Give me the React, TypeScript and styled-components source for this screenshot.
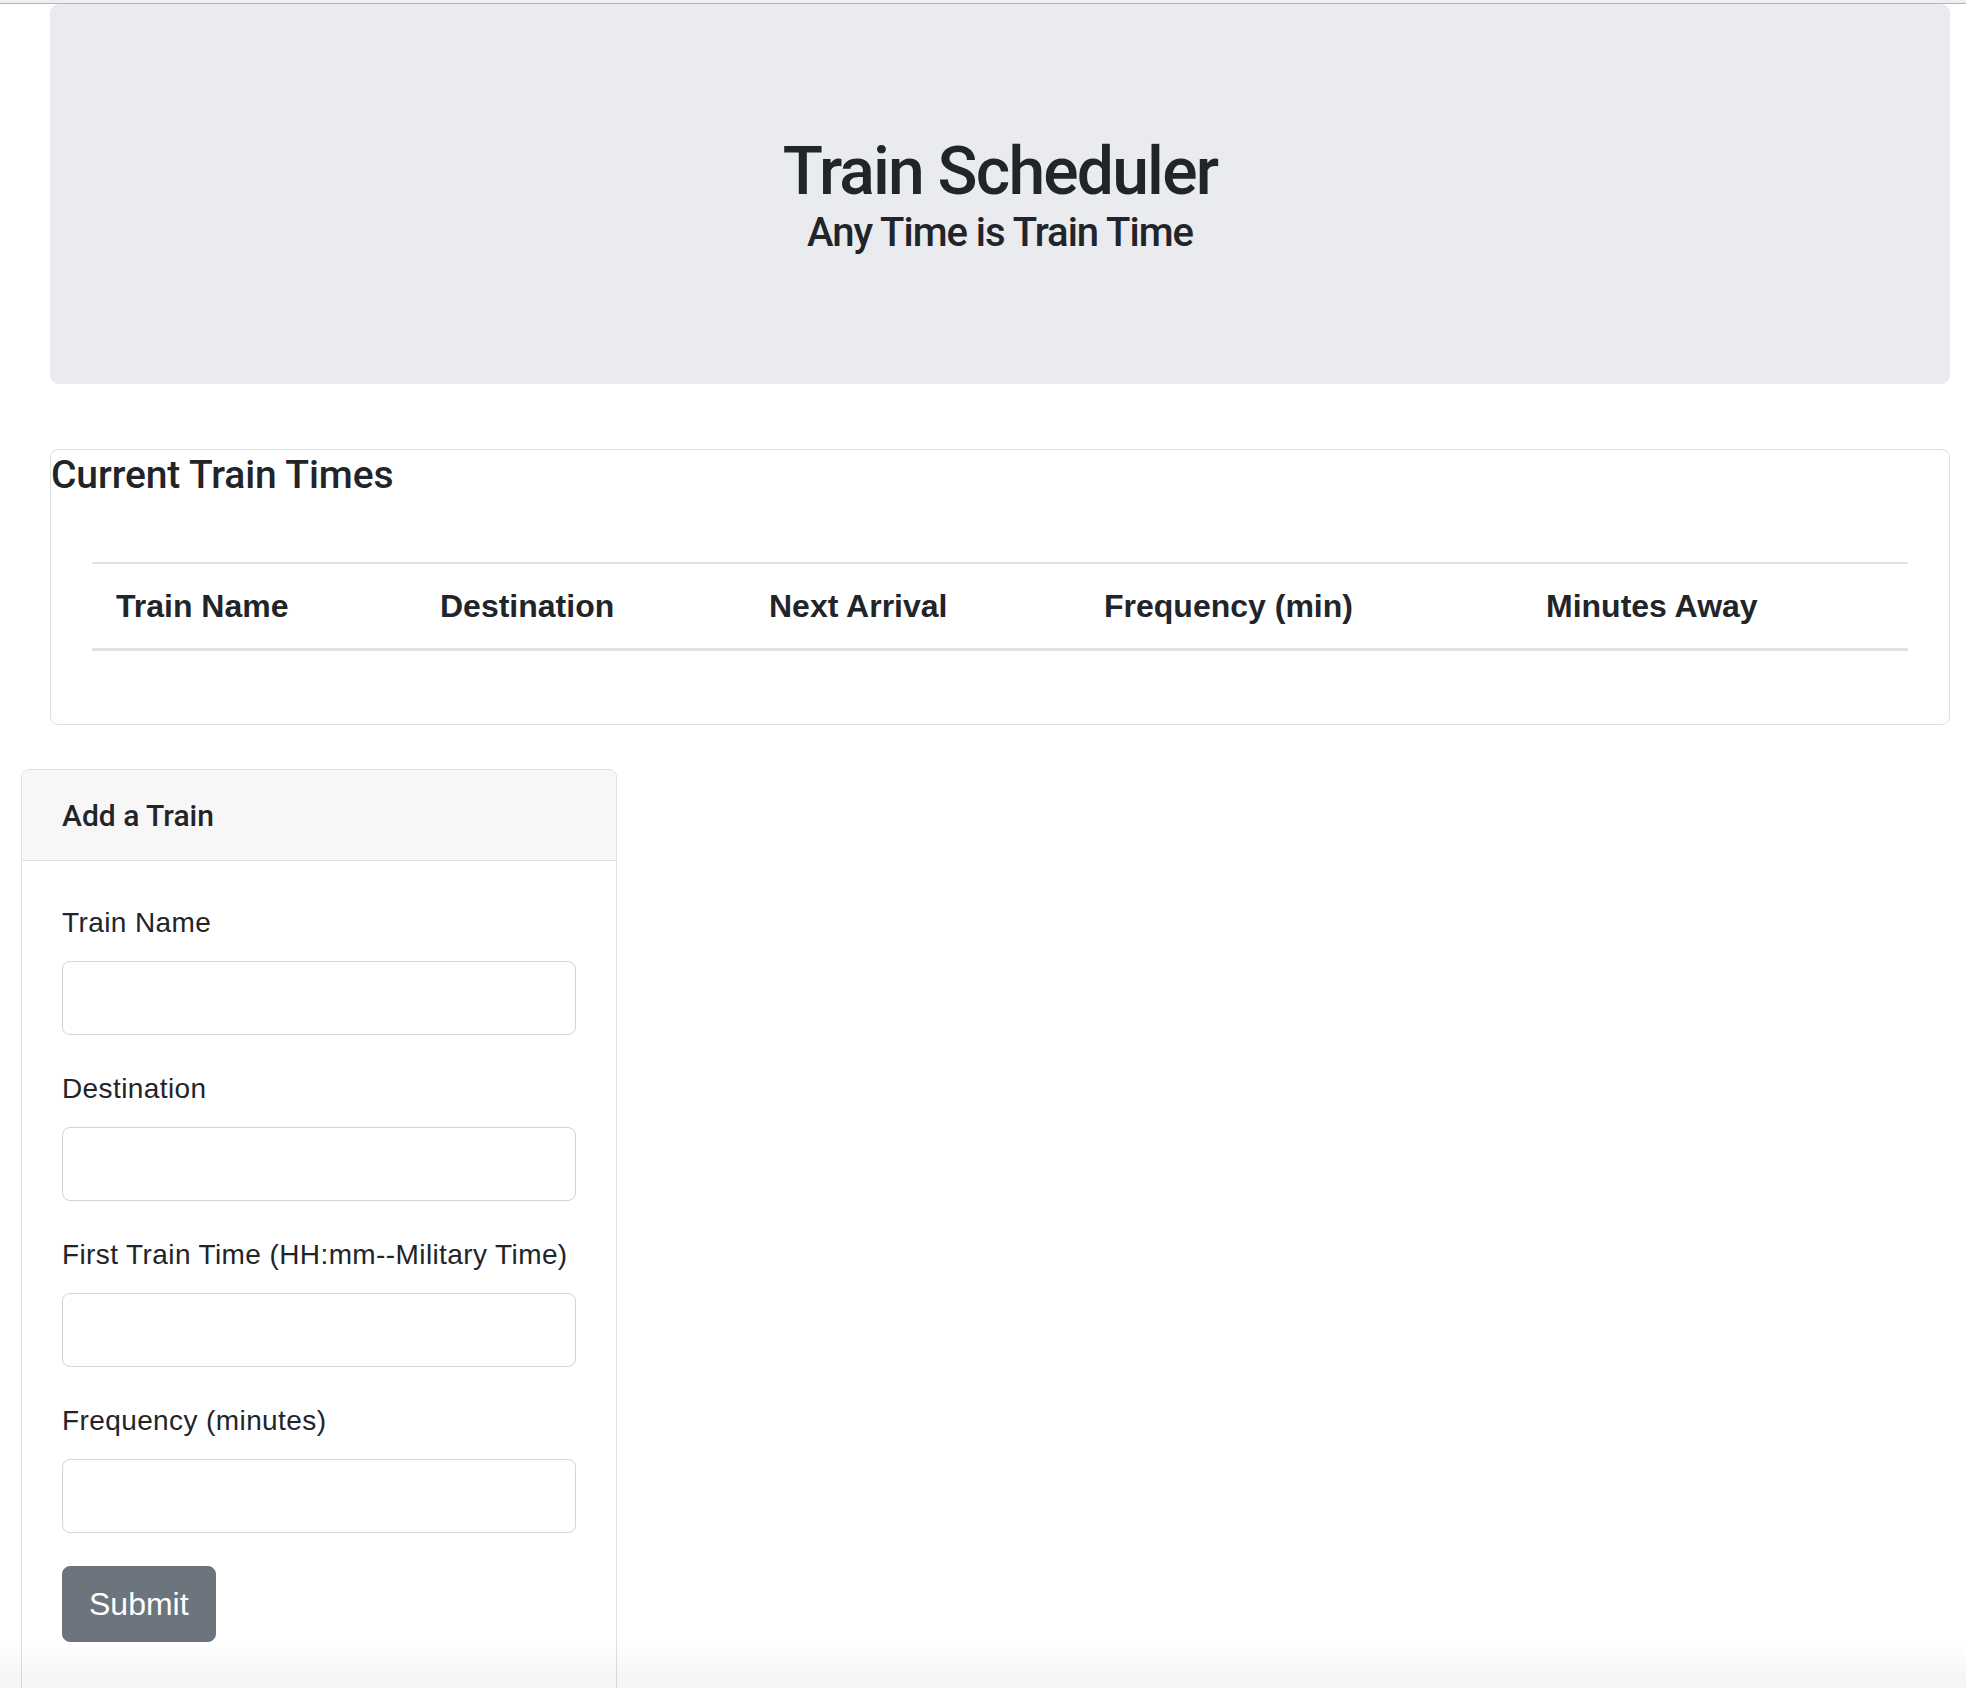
import React from "react";
import styled, { createGlobalStyle } from "styled-components";

const headingFont = `Roboto, "Liberation Sans", Arial, sans-serif`;
const bodyFont = `"Liberation Sans", Arial, Helvetica, sans-serif`;

const GlobalStyle = createGlobalStyle`
  html, body {
    margin: 0;
    padding: 0;
    background: #ffffff;
  }
  body {
    font-family: ${bodyFont};
    color: #212529;
  }
  *, *::before, *::after {
    box-sizing: border-box;
  }
`;

const TopEdge = styled.div`
  height: 4px;
  background: #efefef;
  border-bottom: 1px solid #b4b4b4;
`;

const Jumbotron = styled.header`
  margin: 0 16px 0 50px;
  height: 380px;
  padding-top: 130px;
  background: #e9ebef;
  border-radius: 9px;
  display: flex;
  flex-direction: column;
  align-items: center;
  font-family: ${headingFont};
  color: #212529;
`;

const Title = styled.h1`
  margin: 0;
  font-size: 66px;
  line-height: 75px;
  font-weight: 500;
  letter-spacing: -1.8px;
`;

const Subtitle = styled.h3`
  margin: 0;
  font-size: 40px;
  line-height: 48px;
  font-weight: 500;
  letter-spacing: -1px;
`;

const TimesCard = styled.section`
  margin: 65px 16px 0 50px;
  border: 1px solid #dfdfdf;
  border-radius: 8px;
  padding-top: 2px;
`;

const CardTitle = styled.h3`
  margin: 0;
  font-family: ${headingFont};
  font-size: 39px;
  line-height: 46px;
  font-weight: 500;
  letter-spacing: -0.1px;
`;

const TableWrap = styled.div`
  padding: 64px 41px 73px;
`;

const Table = styled.table`
  width: 100%;
  border-collapse: collapse;
  table-layout: fixed;
`;

const Col = styled.col<{ $w: number }>`
  width: ${(p) => p.$w}px;
`;

const Th = styled.th`
  text-align: left;
  padding: 18px 24px;
  font-family: ${bodyFont};
  font-size: 32px;
  line-height: 48px;
  font-weight: 700;
  white-space: nowrap;
  border-top: 2px solid #dee2e6;
  border-bottom: 3px solid #dee2e6;
`;

const FormCard = styled.section`
  margin: 44px 0 0 21px;
  width: 596px;
  border: 1px solid #dfdfdf;
  border-radius: 8px;
  overflow: hidden;
`;

const FormHeader = styled.div`
  padding: 25px 40px 23px;
  background: #f7f7f7;
  border-bottom: 1px solid #dfdfdf;
  font-family: ${headingFont};
  font-size: 30px;
  line-height: 42px;
  font-weight: 500;
`;

const FormBody = styled.form`
  padding: 41px 40px 80px;
`;

const Group = styled.div`
  margin-bottom: 33px;
`;

const Label = styled.label`
  display: block;
  margin-bottom: 17px;
  font-size: 28px;
  line-height: 42px;
  font-weight: 400;
  letter-spacing: 0.4px;
  white-space: nowrap;
`;

const Input = styled.input`
  display: block;
  width: 100%;
  height: 74px;
  padding: 0 24px;
  font-family: ${bodyFont};
  font-size: 32px;
  color: #495057;
  background: #ffffff;
  border: 1px solid #ced4da;
  border-radius: 8px;
  outline: none;
`;

const SubmitButton = styled.button`
  display: inline-block;
  padding: 14px 26px;
  font-family: ${bodyFont};
  font-size: 32px;
  line-height: 46px;
  color: #ffffff;
  background: #6c757d;
  border: 1px solid #6c757d;
  border-radius: 8px;
  cursor: pointer;
`;

const BottomFade = styled.div`
  position: fixed;
  left: 0;
  right: 0;
  bottom: 0;
  height: 46px;
  pointer-events: none;
  background: linear-gradient(to bottom, rgba(0, 0, 0, 0), rgba(0, 0, 0, 0.045));
`;

const columns: { label: string; width: number }[] = [
  { label: "Train Name", width: 324 },
  { label: "Destination", width: 329 },
  { label: "Next Arrival", width: 335 },
  { label: "Frequency (min)", width: 442 },
  { label: "Minutes Away", width: 386 },
];

const fields = [
  { id: "train-name", label: "Train Name" },
  { id: "destination", label: "Destination" },
  { id: "first-train", label: "First Train Time (HH:mm--Military Time)" },
  { id: "frequency", label: "Frequency (minutes)" },
];

export default function App() {
  return (
    <>
      <GlobalStyle />
      <TopEdge />
      <Jumbotron>
        <Title>Train Scheduler</Title>
        <Subtitle>Any Time is Train Time</Subtitle>
      </Jumbotron>

      <TimesCard>
        <CardTitle>Current Train Times</CardTitle>
        <TableWrap>
          <Table>
            <colgroup>
              {columns.map((c) => (
                <Col key={c.label} $w={c.width} />
              ))}
            </colgroup>
            <thead>
              <tr>
                {columns.map((c) => (
                  <Th key={c.label} scope="col">
                    {c.label}
                  </Th>
                ))}
              </tr>
            </thead>
            <tbody />
          </Table>
        </TableWrap>
      </TimesCard>

      <FormCard>
        <FormHeader>Add a Train</FormHeader>
        <FormBody onSubmit={(e) => e.preventDefault()}>
          {fields.map((f) => (
            <Group key={f.id}>
              <Label htmlFor={f.id}>{f.label}</Label>
              <Input id={f.id} type="text" />
            </Group>
          ))}
          <SubmitButton type="submit">Submit</SubmitButton>
        </FormBody>
      </FormCard>
      <BottomFade />
    </>
  );
}
